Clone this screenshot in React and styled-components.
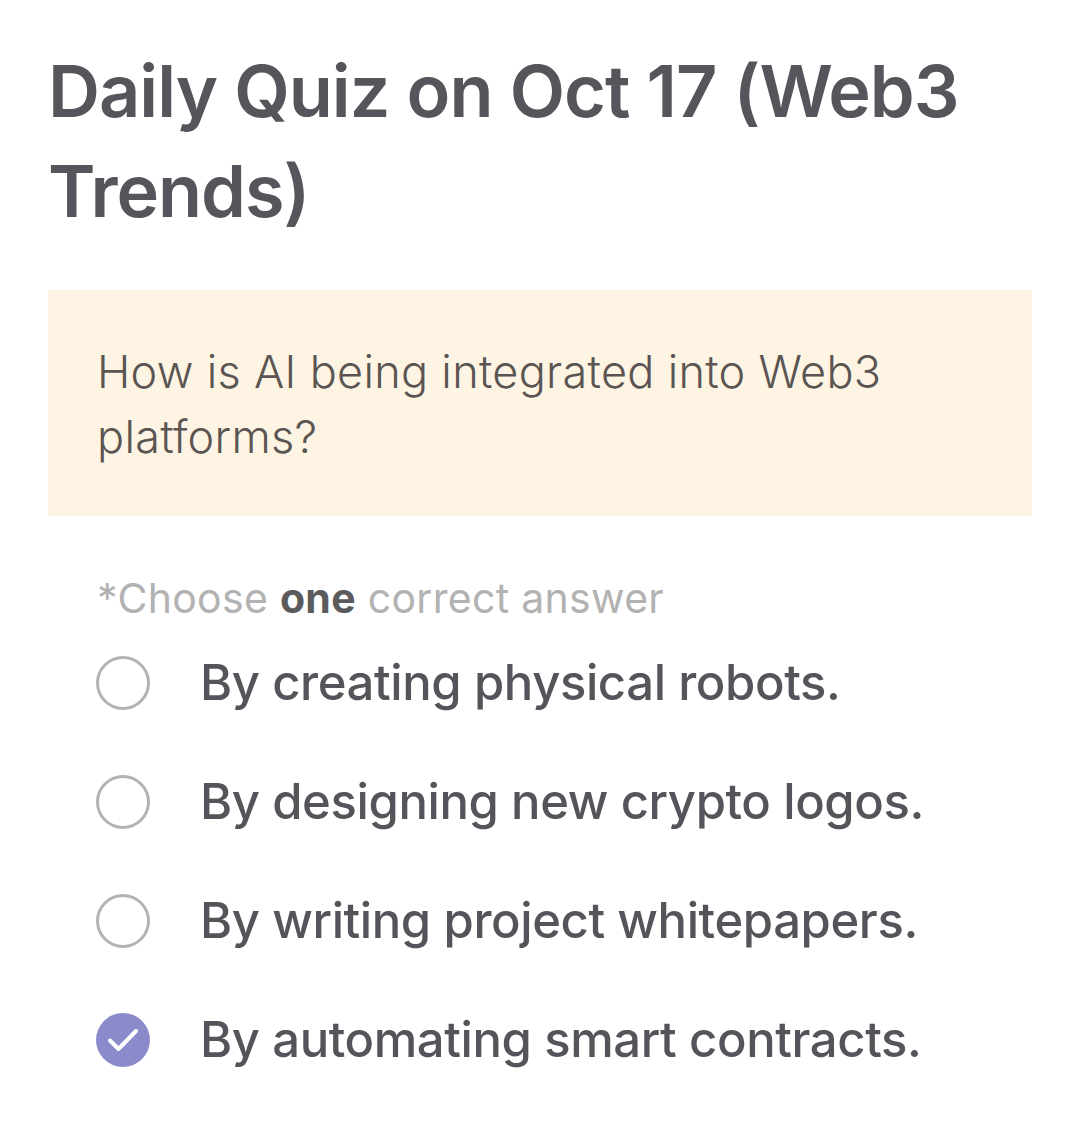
import React, { useState } from "react";
import styled, { createGlobalStyle } from "styled-components";

const GlobalStyle = createGlobalStyle`
  html, body {
    margin: 0;
    padding: 0;
    background: #ffffff;
  }
  body {
    font-family: Inter, "Noto Sans", sans-serif;
  }
`;

const Page = styled.div`
  width: 1079px;
  padding: 41px 47px 40px 48px;
  box-sizing: border-box;
`;

const Title = styled.h1`
  margin: 0;
  font-size: 72px;
  line-height: 100px;
  font-weight: 600;
  letter-spacing: -1px;
  color: #54565b;
`;

const QuestionBox = styled.div`
  margin-top: 49px;
  background: #fef4e3;
  padding: 49px 49px 47px 49px;
`;

const Question = styled.p`
  margin: 0;
  font-size: 45px;
  line-height: 65px;
  font-weight: 300;
  letter-spacing: 0.3px;
  color: #5a5452;
`;

const Hint = styled.div`
  margin: 56px 0 0 49px;
  font-size: 41px;
  line-height: 52px;
  font-weight: 400;
  letter-spacing: 0.3px;
  color: #b2b2b2;

  b {
    font-weight: 700;
    color: #5b5b5d;
  }
`;

const Options = styled.ul`
  list-style: none;
  margin: 19px 0 0 48px;
  padding: 0;
  display: flex;
  flex-direction: column;
  gap: 40px;
`;

const Option = styled.li`
  display: flex;
  align-items: center;
  gap: 50px;
  height: 79px;
  cursor: pointer;
`;

const Radio = styled.span`
  flex: none;
  width: 54px;
  height: 54px;
  border-radius: 50%;
  box-sizing: border-box;
  border: ${(p) => (p.$checked ? "none" : "3px solid #b3b3b3")};
  background: ${(p) => (p.$checked ? "#8b8bcc" : "transparent")};
  display: flex;
  align-items: center;
  justify-content: center;

  svg {
    display: block;
  }
`;

const Label = styled.span`
  font-size: 49px;
  font-weight: 500;
  letter-spacing: -0.4px;
  color: #54555a;
`;

const answers = [
  "By creating physical robots.",
  "By designing new crypto logos.",
  "By writing project whitepapers.",
  "By automating smart contracts.",
];

const Check = () => (
  <svg width="54" height="54" viewBox="0 0 54 54" fill="none">
    <path
      d="M14 27.5l8.5 8.5L40 18"
      stroke="#ffffff"
      strokeWidth="4"
      strokeLinecap="round"
      strokeLinejoin="round"
    />
  </svg>
);

export default function App() {
  const [selected, setSelected] = useState(3);

  return (
    <Page>
      <GlobalStyle />
      <Title>Daily Quiz on Oct 17 (Web3 Trends)</Title>
      <QuestionBox>
        <Question>How is AI being integrated into Web3 platforms?</Question>
      </QuestionBox>
      <Hint>
        *Choose <b>one</b> correct answer
      </Hint>
      <Options>
        {answers.map((a, i) => (
          <Option key={a} onClick={() => setSelected(i)}>
            <Radio $checked={selected === i}>{selected === i && <Check />}</Radio>
            <Label>{a}</Label>
          </Option>
        ))}
      </Options>
    </Page>
  );
}
